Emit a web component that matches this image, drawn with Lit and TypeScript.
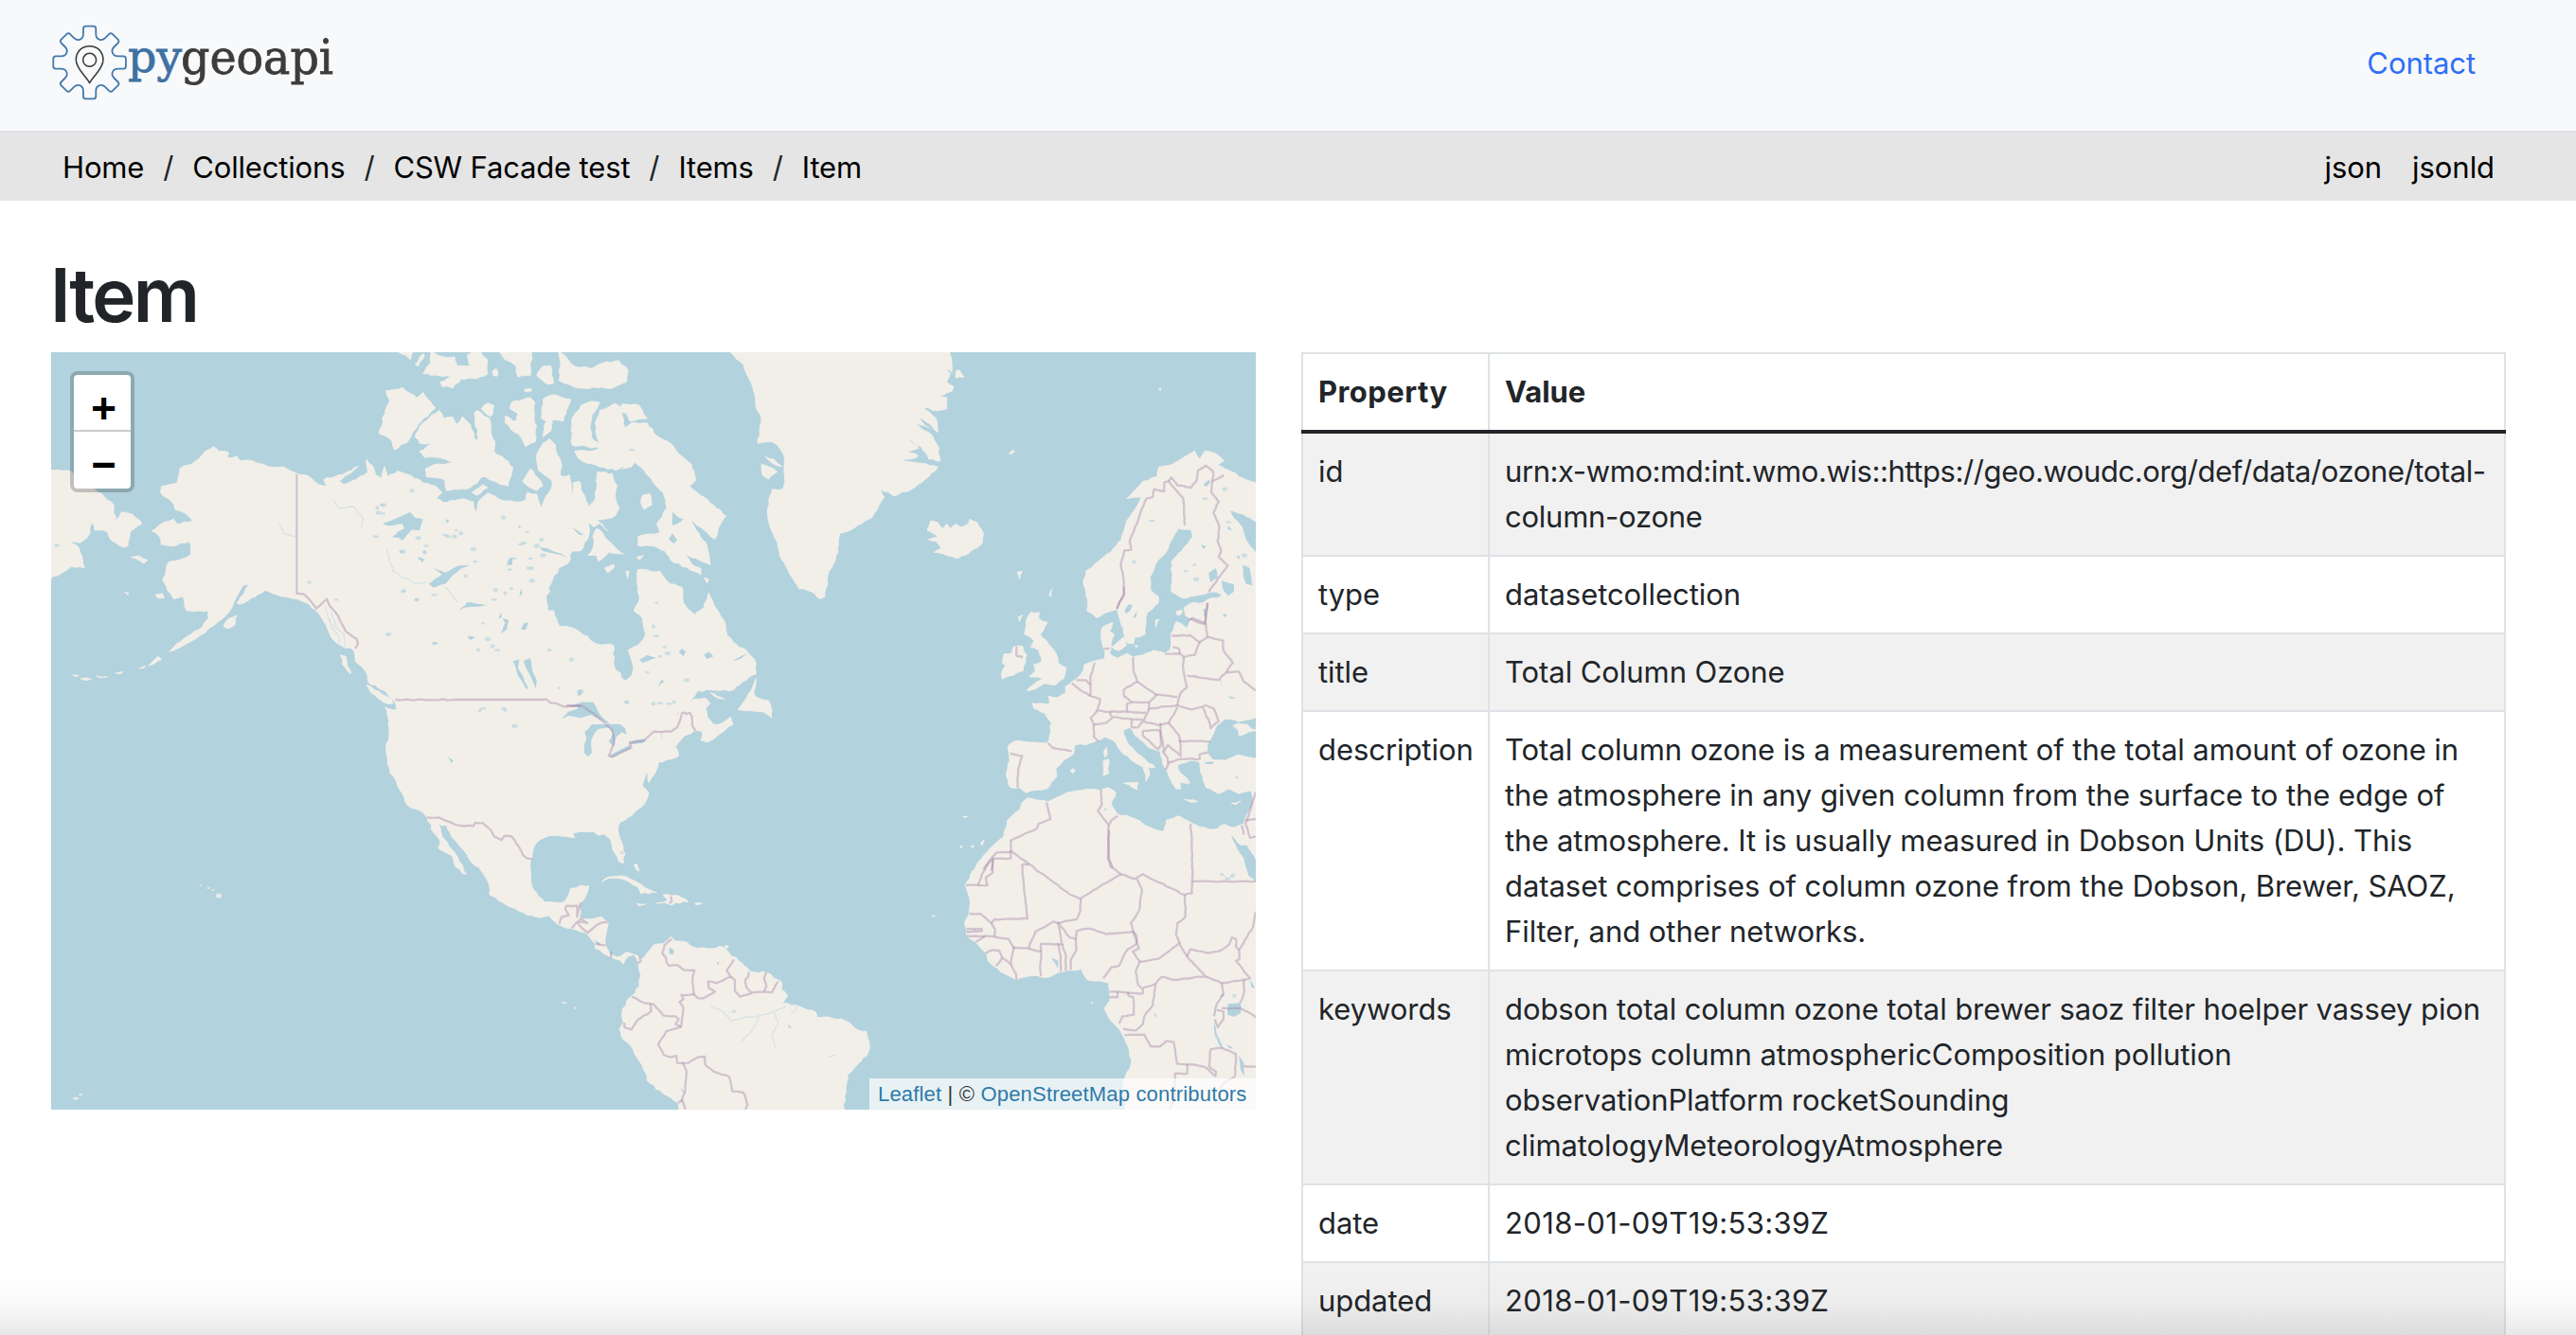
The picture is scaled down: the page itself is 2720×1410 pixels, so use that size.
import { LitElement, html, svg, css } from "lit";
import { customElement } from "lit/decorators.js";
import { classMap } from "lit/directives/class-map.js";

/* ---------- map geometry ---------- */

type Point = [number, number];

/** Survey sheets: origin on the page plus units per pixel on both axes. */
const SHEETS: Record<string, [number, number, number, number]> = {
  A: [50, 370, 3, 3],
  B: [400, 370, 3, 3],
  C: [740, 370, 2.657, 3],
  D: [380, 720, 3, 3],
  E: [980, 620, 3, 3],
  F: [980, 860, 3, 3],
  G: [780, 980, 3, 3],
};

/** Parses "A x,y x,y B x,y ..." into map points. */
function trace(source: string): Point[] {
  let sheet = SHEETS.A;
  const points: Point[] = [];
  for (const token of source.trim().split(/\s+/)) {
    if (SHEETS[token]) {
      sheet = SHEETS[token];
      continue;
    }
    const [x, y] = token.split(",").map(Number);
    points.push([sheet[0] + x / sheet[2], sheet[1] + y / sheet[3]]);
  }
  return points;
}

let seed = 7;
function noise(): number {
  seed = (seed * 16807) % 2147483647;
  return seed / 2147483647 - 0.5;
}

function roughen(points: Point[], closed: boolean, amount: number): Point[] {
  const out: Point[] = [];
  const last = closed ? points.length : points.length - 1;
  for (let i = 0; i < last; i++) {
    const a = points[i];
    const b = points[(i + 1) % points.length];
    const dx = b[0] - a[0];
    const dy = b[1] - a[1];
    const len = Math.hypot(dx, dy);
    out.push(a);
    const steps = len < 80 ? Math.floor(len / 4) : 0;
    for (let s = 1; s < steps; s++) {
      const t = s / steps;
      const k = (noise() * amount) / len;
      out.push([a[0] + dx * t - dy * k, a[1] + dy * t + dx * k]);
    }
  }
  if (!closed) out.push(points[points.length - 1]);
  return out;
}

function toPath(points: Point[], closed: boolean): string {
  return "M" + points.map((p) => p[0].toFixed(1) + " " + p[1].toFixed(1)).join("L") + (closed ? "Z" : "");
}

const area = (s: string, amount = 1.8) => toPath(roughen(trace(s), true, amount), true);
const line = (s: string, amount = 0) => toPath(roughen(trace(s), false, amount), false);

const AMERICAS = `A 528,305 545,320 575,325 570,340 600,335 610,350 650,350 700,368 750,370 790,390 820,395 860,425 885,430
 875,410 910,400 950,385 985,368 960,390 925,415 940,425 990,400 1015,385 1010,345 1030,365 1040,395 1060,405 1068,368
 1078,400 1110,382 1150,395 1190,420 1230,430 1250,450
 B 180,470 215,482 270,470 300,480 310,525 315,480 345,452 390,475 430,480 465,475 470,450 500,455 515,500 525,470 545,440
 550,400 590,400 605,395 612,460 615,420 635,415 645,450 665,500 680,480 690,440 692,385 740,390 755,430 750,470 762,500
 740,530 690,534 725,572 700,548 680,560 665,545 668,570 660,600 640,635 612,636 600,675 570,690 545,740 530,790 535,825
 555,825 572,875 610,878 640,895 690,930 743,935 745,1000 780,1048 805,1020 800,980 790,950 820,935 845,900 835,850
 808,825 825,790 818,740 820,695 850,695 890,700 925,740 960,750 965,800 1000,838 1030,815 1045,768 1070,820 1090,850
 1105,905 1140,940 1165,950 1195,990 1195,1025 1165,1045 1125,1075 1080,1078 1010,1078 985,1110
 D 1000,110 1030,75 1060,55 1095,52 1110,68 1095,85 1100,110 1120,135 1150,130 1175,112 1182,135 1155,155 1100,192
 1080,185 1085,160 1060,155 1020,180 1000,205 1010,235 985,245 945,255 935,290 915,320 905,285 900,310 895,330 915,350
 908,375 880,405 850,430 825,445 818,470 830,510 840,545 835,575 820,570 800,530 795,500 775,483 755,487 740,475 700,475
 675,480 680,495 640,490 600,488 560,510 547,540 545,560 540,590 542,635 565,680 585,698 620,700 650,695 668,655 700,645
 725,647 715,680 700,700 695,745 720,752 765,745 787,762 780,800 778,835 795,865 815,872 850,857 880,868 895,880 918,850
 930,835 960,830 985,808 1000,822 1035,825 1050,838 1100,845 1150,840 1170,860 1200,885 1235,918 1290,922 1335,950
 1335,975 1355,995
 G 140,240 180,245 195,250 245,268 250,285 270,282 325,288 350,300 380,325 405,328 414,365 410,395 370,440 345,465
 340,520 330,590
 D 1010,1370 1008,1335 960,1305 910,1265 905,1240 870,1180 850,1145 828,1125 822,1100 835,1080 830,1050 845,1010 862,995
 885,965 890,930 882,895 868,865 850,870 835,895 815,880 790,870 760,850 745,845 745,830 715,795 680,785 640,775 600,742
 570,748 530,740 480,715 440,695 410,675 408,640 385,600 345,560 325,530 290,490 275,455 248,450 260,490 290,530 315,570
 338,610 325,608 298,575 290,550 248,528 255,510 235,480 212,430 200,415 150,390 128,345 115,315 95,290 88,250 83,210
 92,160 88,110 80,80
 A 1105,1140 1105,1125 1075,1085 1015,1050 1010,1020 975,985 970,950 920,930 895,900 870,850 830,805 790,788 740,780
 690,760 660,780 610,805 600,800 640,740 620,745 590,800 575,830 540,860 500,895 450,925 385,955 430,915 480,885 510,850
 510,825 480,825 440,825 430,780 400,788 380,760 365,725 385,670 430,660 455,645 450,605 410,618 360,615 355,590 330,572
 360,550 400,535 410,550 460,540 435,515 405,505 390,475 358,450 362,430 410,420 420,375 470,350 500,320`;

const OLD_WORLD = `C 1590,430 1557,420 1530,410 1490,385 1470,375 1450,365 1468,350 1440,325 1415,318 1400,345 1385,318 1360,335
 1340,350 1310,365 1285,370 1280,400 1240,415 1220,440 1195,470 1235,465 1220,500 1195,540 1180,600 1150,640 1130,655
 1080,700 1073,740 1085,790 1083,825 1110,848 1140,830 1168,820 1175,850
 E 612,120 632,178 650,180 655,160 688,150 690,120 695,80 730,50 730,30
 C 1262,760 1260,720 1275,680 1305,640 1322,600 1340,565 1375,568 1380,590 1350,635 1320,670 1322,720 1320,765 1350,785
 1400,775 1440,765 1460,775
 E 928,30 885,40 870,50 830,52 810,65 815,90 830,100 820,130 800,115 785,110 768,150 770,185 765,200 750,210 715,200
 690,210 650,222 630,210 600,225 575,210 580,180 590,150 575,140 585,112 550,130 548,165 560,200 558,228 525,235 495,245
 485,275 455,300 435,315 435,335 410,350 380,345 385,370 330,368 335,385 370,400 390,430 385,470 378,495 330,492 275,488
 252,505 258,550 248,600 260,635 290,635 310,652 330,645 375,640 408,600 405,575 430,548 460,530 465,500 500,500 530,490
 560,475 585,485 610,520 640,545 680,570 690,600 690,615 702,595 695,570 720,572 690,548 655,520 630,490 618,455 640,445
 655,470 700,510 735,520 742,560 755,580 765,605 785,640 800,640 798,620 825,625 800,590 790,565 830,550 860,555 862,575
 870,600 880,635 920,655 950,640 985,655 1022,645 1030,680 1010,720 1000,750 970,762 940,752 905,768 860,760 835,748
 790,725 755,738 745,775 700,760 670,740 640,728 600,720 580,690 595,650 570,635 545,645 500,640 440,650 410,665 380,680
 345,675 315,668 300,680 290,705 250,740 240,790 205,820 160,870 140,900
 F 118,225 132,270 130,310 115,345 122,385 150,405 185,440 190,465 240,505 280,525 330,512 375,518 430,498 485,490
 505,525 545,528 572,535 575,590 558,615 575,650 605,680 622,710 635,740 643,790 625,830 615,870 625,900 620,950
 1060,950`;

const ISLANDS = [
  "A 0,378 60,380 85,392 150,440 210,490 215,540 235,512 270,520 300,550 262,575 255,620 240,625 200,600 190,575 150,570 140,545 135,580 105,610 70,605 100,625 118,690 75,685 0,732",
  "A 265,655 290,650 318,665 305,675 285,662",
  "A 558,875 575,850 600,840 595,868 572,882",
  "A 342,775 365,770 370,785 350,785",
  "A 320,1000 350,970 362,980 340,992",
  "A 290,1008 310,1000 308,1006",
  "A 215,1022 240,1018 230,1026",
  "A 155,1032 190,1034 170,1038",
  "A 80,1028 100,1030 90,1034",
  "A 105,1040 140,1042 120,1046",
  "A 245,765 258,770 254,775",
  "A 1010,1060 1050,1080 1090,1105 1095,1120 1065,1115 1025,1085",
  "A 928,965 945,970 950,1000 962,1025 935,995",
  "B 22,128 75,118 120,150 140,133 180,183 135,225 108,258 95,285 50,315 35,280 2,265 20,190 35,160",
  "B 190,190 205,215 235,212 245,235 265,210 290,235 305,285 315,280 302,200 310,190 350,215 355,260 368,290 365,320 400,345 425,372 410,430 385,425 330,400 290,435 215,445 210,412 150,400 148,375 180,360 235,358 190,340 145,340 128,320 170,297 130,295 115,275 130,240",
  "B 325,185 345,167 365,175 355,210",
  "B 295,450 330,425 345,435 310,460",
  "B 420,165 445,160 480,150 495,165 492,215 500,240 495,290 465,305 450,275 430,260 400,230 400,208 435,225 440,200 415,185",
  "B 520,155 555,140 608,155 585,225 550,220 545,255 520,275 530,225 515,215",
  "B 540,280 560,300 565,330 580,365 575,400 545,410 505,380 500,330 520,295",
  "B 480,375 505,405 520,430 500,445 470,430 455,415",
  "B 770,170 825,175 850,215 810,222 795,225 785,200 768,195",
  "B 612,215 640,175 670,162 700,165 675,205 670,250 680,285 700,295 690,270 685,230 700,190 750,168 765,180 780,245 800,230 850,230 880,270 925,295 960,335 990,360 1005,410 985,430 1030,465 1060,490 1100,525 1075,565 1065,598 1030,570 990,535 1005,570 1040,620 1050,680 1025,670 980,650 1020,690 1020,712 985,695 925,665 905,635 870,620 820,618 820,590 850,582 890,578 880,550 912,500 900,450 870,420 840,380 810,355 800,370 750,380 700,370 660,358 630,340 620,320 680,318 700,310 660,305 612,300",
  "B 835,460 860,455 865,490 840,505 830,485",
  "B 690,565 710,580 740,615 775,645 730,640 695,668 690,650 662,650 680,620 678,590",
  "B 715,690 745,678 745,690 725,705",
  "B 782,700 793,700 788,722",
  "B 818,655 838,650 825,665",
  "B 1030,720 1045,725 1040,738",
  "B 570,0 600,30 620,50 670,58 710,40 760,32 790,65 785,100 745,118 640,120 590,105 570,95 575,50",
  "B 520,50 545,50 553,105 535,108 500,80",
  "B 380,0 485,0 480,80 440,85 435,50 400,30",
  "B 165,0 200,20 240,20 250,50 290,50 280,15 320,0 345,30 345,75 310,90 260,90 235,120 200,115 195,100 230,85 140,75 165,40",
  "B 360,65 372,58 378,70 375,82 362,80",
  "B 55,0 110,0 100,30 85,15",
  "B 115,45 140,10 145,15 125,50",
  "B 460,125 480,120 485,128 465,132",
  "B 1195,1040 1170,1090 1138,1138 1180,1142 1215,1145 1245,1165 1245,1140 1235,1110 1190,1095",
  "B 1050,1085 1095,1105 1065,1098",
  "C 72,0 120,45 135,90 148,130 155,180 170,215 160,295 200,290 215,300 235,340 235,400 230,440 200,440 187,500 195,560 215,610 225,660 250,710 275,755 310,765 335,788 348,780 360,700 385,640 390,580 420,570 450,550 480,530 500,490 515,465 505,440 545,462 600,435 640,400 665,370 620,358 565,352 610,335 580,318 612,310 570,268 618,305 640,345 672,350 668,310 650,270 600,230 640,245 585,190 630,225 665,260 660,215 625,180 665,192 690,185 690,150 665,145 705,130 710,115 690,100 700,75 668,45 705,70 704,40 698,0",
  "C 170,360 190,368 215,385 190,408 172,395",
  "C 180,335 205,345 228,368 200,358",
  "C 715,65 725,62 738,85 715,88",
  "C 635,570 645,540 665,545 680,565 690,550 700,565 715,550 730,560 750,550 755,535 775,545 793,580 790,610 755,640 720,660 690,650 655,640 675,628 660,605 638,600 665,592",
  "C 865,326 876,316 880,322 868,330",
  "C 1284,122 1290,120 1290,128",
  "C 888,702 902,700 895,725",
  "C 977,775 985,755 982,780",
  "E 325,80 352,80 350,100 378,112 355,150 375,170 405,210 412,240 437,255 430,290 405,310 370,305 345,320 312,328 345,300 365,290 320,285 340,265 335,245 360,235 350,200 325,190 335,170 305,150 310,110",
  "E 270,190 300,188 312,215 302,265 270,280 235,292 232,275 245,250 235,240 240,212 265,210",
  "E 285,95 300,88 290,110",
  "E 555,550 572,545 572,590 555,598",
  "E 565,508 568,530 560,540 556,522",
  "E 620,622 665,618 662,642",
  "E 812,672 855,680 830,682",
  "E 960,685 990,677 975,689",
  "E 605,170 620,158 628,185 605,202 582,190",
  "E 720,105 732,102 722,128",
  "E 785,78 805,72 802,86 790,90",
  "E 450,582 460,575 466,582 458,590",
  "E 655,185 664,186 660,192",
  "E 800,590 830,622 815,615",
  "E 110,727 125,727 118,731",
  "E 135,822 145,818 142,826",
  "E 165,812 178,800 172,818",
  "E 100,822 108,820 106,828",
  "F 515,596 523,597 518,600",
  "F 12,320 22,322 16,325",
  "D 765,635 790,618 830,615 870,630 900,650 940,668 890,672 880,650 840,628 800,622",
  "D 960,676 1010,678 1040,698 1000,700 990,708 965,700 940,702 975,692",
  "D 875,702 905,705 885,710",
  "D 1062,700 1085,703 1065,708",
  "D 868,580 878,578 885,600 875,595",
  "D 1155,838 1168,836 1162,846",
  "D 640,1016 655,1017 648,1020",
  "D 678,1032 686,1034 682,1037",
  "G 165,270 182,250 178,262",
];

/** Small Pacific islands, placed directly in map coordinates. */
const ATOLLS: [number, number, number, number][] = [
  [212, 935, 1.2, 0.9],
  [220, 938, 1.6, 1],
  [225, 940, 1.4, 0.9],
  [231, 946, 3, 2.6],
  [80, 1160, 3, 1.6],
  [85, 1156, 2, 1.2],
];

const LAKES = [
  "D 638,118 660,95 690,85 700,65 740,65 765,110 795,138 760,118 730,105 700,115 660,108",
  "D 735,135 712,160 718,180 710,200 710,225 722,238 735,225 732,190 742,165 755,150 790,145 800,160 800,170 788,190 805,205 812,175 830,160 845,168 840,148 825,135 790,135",
  "D 790,235 820,218 855,200 855,212 800,240",
  "D 850,198 870,185 908,182 895,195 865,198",
  "D 688,30 700,25 704,38 692,46",
  "D 278,237 296,250 290,258",
  "D 980,842 995,850 992,865 980,862",
  "D 740,815 765,832 755,834",
  "B 458,985 480,975 485,1010 500,1045 498,1072 488,1050 470,1015",
  "B 425,985 445,980 440,1005 455,1030 475,1075 465,1070 440,1030 432,1000",
  "B 158,740 200,710 165,685 210,705 245,685 290,680 255,695 235,712 210,740 175,752",
  "B 12,550 60,530 100,512 115,530 140,535 130,570 105,568 75,603 65,595 42,592 60,575 80,565 75,550 30,556",
  "B 255,825 280,798 310,803 350,808 300,812 270,815",
  "B 385,898 400,865 392,848 412,855 405,885",
  "B 378,850 388,830 390,845",
  "B 450,885 460,865 474,862 465,885",
  "B 405,680 412,660 425,655 422,680",
  "B 508,625 535,628 600,655 560,645 520,636",
  "B 612,560 650,585 635,585",
  "B 445,780 450,755 455,770",
  "B 930,512 950,530 965,535 945,550 930,555",
  "B 918,600 930,580 945,600 935,612",
  "B 973,648 1000,665 1022,690 995,680",
  "B 825,980 850,965 880,975 850,985 835,990",
  "B 1030,965 1045,955 1060,970 1040,978",
  "B 950,955 960,945 972,955 965,970",
  "B 1120,985 1165,960 1150,975",
  "B 885,1065 895,1045 905,1048",
  "B 280,905 305,910 290,918",
  "B 165,927 190,928 175,932",
  "B 123,655 145,662 138,672",
  "B 440,555 452,558 445,564",
  "B 215,535 223,540 217,550",
  "B 600,1128 650,1112 640,1130",
  "E 1060,410 985,428 960,420 940,420 915,440 900,475 885,500 885,525 900,545 940,548 980,530 1060,545",
  "E 875,555 905,552 900,562 880,560",
  "E 622,75 635,55 648,58 640,75 628,85",
  "E 650,95 662,75 658,98",
  "E 872,70 880,68 880,95 874,92",
  "E 930,-20 968,-10 968,15 950,28 935,10",
  "E 935,88 946,86 942,94",
  "E 950,345 975,352 960,354",
  "E 972,600 984,602 980,608",
  "E 558,702 568,704 560,708",
  "F 960,65 980,90 1000,108 990,98 1010,98 1038,145 1060,175 1060,260 1040,215 1015,195 1000,140 980,110",
  "F 950,600 990,598 990,630 970,642 948,635",
  "F 905,640 915,700 938,745 925,735 908,700",
  "F 985,765 1000,785 1002,830 992,815",
  "F 1020,525 1036,552 1024,548",
  "F 925,575 942,565 932,580",
  "F 945,730 968,742 955,742",
  "F 390,455 412,465 412,490 402,472",
  "F 715,625 725,640 720,642",
  "C 1485,508 1520,520 1560,545 1590,555 1590,660 1557,640 1530,600 1520,560 1495,530",
  "C 1520,680 1540,690 1548,745 1530,740 1522,715",
  "C 1502,655 1512,650 1510,662",
  "C 1410,425 1425,410 1430,418 1418,432",
  "C 1425,705 1445,690 1450,720 1430,735",
  "C 1480,555 1490,570 1478,568",
  "C 1403,615 1418,622 1410,630",
  "G 155,305 168,315 160,318",
  "G 282,410 310,400 295,408",
  "D 1130,888 1138,888 1134,900",
  "D 1014,1285 1034,1305 1022,1300",
];

const CRIMEA = "E 965,440 980,432 1010,435 1025,450 1045,455 1015,460 985,472 982,452";

const SPECKS = `B 75,765 120,790 175,775 275,715 305,670 300,630 245,570 260,580 210,585 145,640 72,638 15,490 470,575 515,600
 450,615 485,690 480,660 520,650 430,660 370,760 365,790 400,770 420,755 485,730 330,865 360,938 375,950 315,950 540,950
 345,915 180,928 395,530 880,905 870,875 905,940 915,960 890,970 785,1115 890,1118 935,1115 850,1020 975,1045 570,1070
 610,980 330,1135 400,1140 150,620 125,595 15,518 105,445 800,315 770,375 415,695 500,620 880,800 475,690 460,610
 A 1195,640 1180,660 1125,638 1265,540 1290,590 1270,590 1045,500 1060,490 1050,515 1170,790 1130,762 1040,590 830,735
 915,790 1080,900 1225,928 30,618 C 1265,540 1215,670 1360,700 1390,725 1385,680 1470,440 1415,470 1470,840 1480,545
 1525,650 F 930,190 965,195 950,205 970,575 D 1185,1045 700,30 845,65 930,70 980,70 380,92 455,85 490,140 830,542`;

const RIVERS = [
  "A 905,475 925,500 970,495 1000,535 995,565",
  "A 1075,630 1095,700 1165,740 1200,735",
  "A 735,550 750,580 785,590",
  "B 210,750 250,800",
  "D 1110,1025 1150,1045 1175,1075 1215,1065 1260,1060 1300,1050 1350,1030",
  "D 1210,1140 1250,1095 1265,1060",
  "D 1315,1160 1305,1120 1325,1085 1315,1050",
  "D 958,155 956,180",
  "A 880,810 890,850 910,880",
  "A 900,830 915,880 940,900 940,940",
  "A 895,850 900,880 920,900 925,930",
  "F 930,190 950,205 970,185",
  "E 925,290 930,310",
  "G 165,272 180,262 185,250",
];

const BORDERS = [
  "A 790,392 790,770 812,773 830,790 852,818 885,788 895,810 920,840 945,890 980,915 984,930 975,945",
  "A 1102,1107 1290,1107 B 520,1107 530,1105 545,1118 560,1118 590,1130 600,1125 640,1128",
  "D 655,78 700,75 740,100 770,125 800,155 805,195 788,235 800,238 860,210 855,192 900,188 930,158 985,158 1005,145 1020,100 1030,98 1035,103 1045,98 1052,110 1053,140 1063,155",
  "D 212,430 250,430 270,440 315,456 360,457 365,447 390,448 415,470 425,490 448,502 458,488 480,490 505,525 517,550 530,560 548,562",
  "D 632,768 640,745 662,740 650,720 655,710 688,710 688,745 700,700",
  "D 672,782 690,760 720,765 D 700,750 690,765 708,785 722,795 740,780 760,765 785,762",
  "D 745,830 778,835",
  "D 795,855 796,875",
  "D 885,870 890,885 880,892",
  "D 985,680 988,695 980,703",
  "D 988,815 965,835 958,860 970,875 972,892 980,900 1005,898 1025,913 1060,915 1053,950 1058,990 1070,1003 1090,1003 1125,982 1105,970 1103,950 1130,955 1175,935 1162,915 1185,880",
  "D 1175,935 1188,945 1188,980 1205,998 1245,985 1285,982 1305,985 1325,950",
  "D 1232,920 1230,935 1220,945 1225,970 1240,985",
  "D 1288,920 1280,940 1288,965 1280,980",
  "D 1060,990 1018,993 1025,1005 1012,1015 1024,1030 1018,1093 1000,1085 1010,1070 1000,1060 962,1058 930,1022 900,1018 862,998",
  "D 920,1020 922,1045 880,1072 860,1102 838,1095 838,1080",
  "D 1018,1093 970,1108 945,1150 962,1182 985,1190 1003,1185 1005,1208 1040,1208 1070,1190 1093,1188 1095,1215 1120,1235 1170,1252 1180,1298 1215,1302 1228,1340 1220,1358",
  "D 1022,1208 1035,1235 1030,1300 1020,1325 1032,1356",
  "D 1022,1325 1008,1335",
  "C 1168,820 1172,805 1188,770 1185,720 1178,680 1188,635 1208,632 1203,605 1250,470 1268,465 1272,440 1300,447 1300,418 1312,415 1353,468 1358,555",
  "C 1312,415 1320,403 1338,428 1375,435 1390,415 1395,380 1417,365 1438,385 1432,450 1453,480 1438,515 1455,560 1450,605 1460,635 1453,655 1478,682 1425,765",
  "C 1435,415 1468,395",
  "C 1421,800 1415,865 1380,848 1368,856",
  "E 620,0 620,25 598,68",
  "E 885,50 878,110 885,158 860,175 830,153 770,155",
  "E 830,100 850,110 878,118",
  "E 860,175 845,215 810,222 800,212 750,212",
  "E 775,190 795,195 797,212",
  "E 885,158 935,170 935,200 965,240 945,270 920,295 820,280",
  "E 810,222 808,260 820,318 800,335 790,375",
  "E 945,270 985,268 1000,300 1038,328",
  "E 650,222 650,265 662,300 620,325 620,345 645,365 630,370 630,395 575,395 535,392 545,355 513,345 515,280 528,240",
  "E 455,305 480,325 513,345",
  "E 470,295 500,295 513,310",
  "E 662,300 720,340 790,348",
  "E 645,365 700,365 725,340",
  "E 700,365 700,385 790,375 835,388 880,375 905,385 920,425 895,448 888,420 868,378",
  "E 700,385 685,420 645,420 645,445 665,445 680,425 730,438 762,430 790,380",
  "E 630,395 690,398",
  "E 535,392 515,415 525,435 565,430 585,412 645,418",
  "E 575,395 580,410",
  "E 525,435 525,475 540,490",
  "E 380,495 395,510 455,520",
  "E 260,528 272,530 298,535 285,580 283,635",
  "E 558,195 575,195",
  "E 280,188 280,218 300,222",
  "E 680,455 735,455 738,500 728,515 680,470 680,455",
  "E 735,430 738,470 748,520 760,500 775,515 800,535 800,500 795,470 762,430",
  "E 795,488 850,488 895,490",
  "E 752,580 765,555 800,545 860,545 860,530 885,525",
  "E 742,520 758,540 760,560",
  "E 375,682 388,735 350,750 345,765 262,803 262,840 262,860 205,860 200,900",
  "E 262,840 215,842 200,860 175,895",
  "E 548,642 550,690 538,710 572,755 580,740 600,725",
  "E 572,755 572,860 585,890",
  "E 832,750 838,900 F 836,213 1060,213",
  "E 1038,650 1025,690 1005,750 1020,795 1038,790",
  "E 1005,740 1038,735",
  "E 993,755 1000,785",
  "F 262,115 450,255 480,268 610,190 577,165 570,140 572,50",
  "F 300,158 318,160",
  "F 298,158 305,250 315,330 210,333 200,345 165,315 130,315",
  "F 205,140 205,185 183,200 188,225 120,225",
  "F 200,145 170,190 158,225",
  "F 484,268 482,305 470,333 410,345 398,340 340,372 318,425 268,422",
  "F 122,363 170,363 170,370 122,372",
  "F 122,385 210,387 212,365 200,345",
  "F 150,405 180,388",
  "F 210,388 255,395 272,425 262,475 235,455 215,480",
  "F 183,440 205,430 225,432 235,455",
  "F 262,475 278,505 280,525",
  "F 318,425 358,435 355,480 358,512",
  "F 358,435 358,410 425,412 412,345 448,390 468,395 470,370 510,362 565,380 650,372",
  "F 412,412 420,450 420,498",
  "F 425,412 437,450 435,495",
  "F 468,395 470,430 452,460 452,493",
  "F 610,190 655,205 680,190 810,255 836,250 836,213",
  "F 662,205 678,240 668,305 642,345 650,372 660,385 660,410 630,430 605,480 580,485 555,520",
  "F 650,372 668,425 648,435 670,465 657,500 665,540 680,555 680,568 575,562",
  "F 670,468 730,458 795,410 820,450 880,515 860,515 785,525 740,515 720,538 680,550",
  "F 814,255 815,325 790,345 785,380 798,410",
  "F 820,450 830,428 890,440 930,430 955,410 962,390 975,395 975,420 985,430",
  "F 1038,310 1030,355 985,430 985,460 975,465 1020,520 995,525 930,535 880,515",
  "F 720,538 712,605 685,640 680,665 658,685 618,680",
  "F 600,562 600,580 572,580",
  "F 632,562 635,575 650,580 652,635 615,640 605,662",
  "F 622,700 685,698 705,735 735,735 755,718 778,722 788,790 850,795 880,802 910,830 912,815 890,800 895,745 930,740",
  "F 820,790 820,822 782,822 782,900 765,936",
  "F 930,535 935,570 915,600 905,640",
  "F 915,620 935,625 935,650 918,675 908,650",
  "F 930,615 990,615 1060,655",
  "F 1000,525 1000,570 988,598",
  "F 930,740 975,760 972,830 940,850 925,870",
  "F 1000,798 1060,800",
];

/* ---------- logo geometry ---------- */

/** One tooth of the gear, repeated eight times around the centre. */
const TOOTH: Point[] = [
  [-30, -73], [-20, -77], [-20, -90], [-20, -107], [-20, -115], [-12, -115],
  [12, -115], [20, -115], [20, -107], [20, -90], [20, -77], [30, -73],
];

function gearPath(): string {
  let d = "";
  for (let i = 0; i < 8; i++) {
    const a = (i * Math.PI) / 4;
    const p = TOOTH.map(([x, y]) =>
      `${(x * Math.cos(a) - y * Math.sin(a)).toFixed(2)} ${(x * Math.sin(a) + y * Math.cos(a)).toFixed(2)}`);
    d += `${i ? "L" : "M"}${p[0]}Q${p[1]} ${p[2]}L${p[3]}Q${p[4]} ${p[5]}L${p[6]}Q${p[7]} ${p[8]}L${p[9]}Q${p[10]} ${p[11]}`;
  }
  return d + "Z";
}

const PAGE_FONT = css`"Inter", "Liberation Sans", sans-serif`;

@customElement("geo-logo")
export class GeoLogo extends LitElement {
  static styles = css`
    :host { display: block; width: 360px; height: 100px; }
    svg { display: block; overflow: visible; }
    .gear { fill: none; stroke: #4479ac; stroke-width: 5.4; stroke-linejoin: round; }
    .pin { fill: none; stroke: #3a3a3a; stroke-width: 4.6; stroke-linejoin: round; }
    .word { font-family: "DejaVu Serif", "Liberation Serif", serif; stroke-width: 0.8; }
    .py { fill: #3f71a3; stroke: #3f71a3; font-size: 46px; }
    .geo { fill: #3c3c3b; stroke: #3c3c3b; font-size: 51px; }
  `;
  render() {
    return html`<svg width="360" height="100" viewBox="54 24 360 100" role="img">
      <g transform="translate(94.6 66) scale(0.3333)">
        <path class="gear" d=${gearPath()} />
        <path class="pin" d="M0 65C-12 42-43 20-43-8C-43-35-24-52 0-52S43-35 43-8C43 20 12 42 0 65Z" />
        <circle class="pin" cx="0" cy="-8" r="21" />
      </g>
      <text class="word py" x="135" y="76" textLength="57" lengthAdjust="spacingAndGlyphs">py</text>
      <text class="word geo" x="191" y="78" textLength="161" lengthAdjust="spacingAndGlyphs">geoapi</text>
    </svg>`;
  }
}

@customElement("geo-map")
export class GeoMap extends LitElement {
  static styles = css`
    :host { display: block; position: relative; width: 1272px; height: 800px; background: #b2d2dd; overflow: hidden; }
    .tiles { display: block; }
    .land { fill: #f2efe9; stroke: #f2efe9; stroke-width: 0.8; stroke-linejoin: round; }
    .atoll { fill: #f2efe9; opacity: 0.8; }
    .lake { fill: #b2d2dd; }
    .speck { fill: #b2d2dd; opacity: 0.6; }
    .river { fill: none; stroke: #d6e2e4; stroke-width: 1.3; }
    .border { fill: none; stroke: #a585a8; stroke-opacity: 0.42; stroke-width: 2.3; stroke-linejoin: round; }
    .soft { filter: blur(0.55px); }
    .zoom { position: absolute; left: 20px; top: 20px; width: 60px; border: 4px solid rgba(0, 0, 0, 0.2);
      border-radius: 8px; background-clip: padding-box; background-color: #fff; }
    .zoom button { all: unset; box-sizing: border-box; display: flex; align-items: center; justify-content: center;
      width: 60px; height: 60px; font: 600 47px/50px ${PAGE_FONT}; color: #000; }
    .zoom .in { border-bottom: 2px solid #ccc; padding: 6px 0 0 3px; }
    .zoom .out { padding: 4px 0 0 3px; }
    .attribution { position: absolute; right: 0; bottom: 0; box-sizing: border-box; width: 408px; height: 33px; padding-left: 9px;
      background: rgba(255, 255, 255, 0.7); color: #333; font: 22px/34px "Liberation Sans", Arial, sans-serif;
      letter-spacing: 0.18px; white-space: nowrap; }
    .attribution a { color: #2f7aa8; text-decoration: none; }
  `;
  render() {
    seed = 7;
    const specks = trace(SPECKS);
    return html`
      <svg class="tiles" width="1272" height="800" viewBox="54 372 1272 800">
        <g class="soft">
          <path class="land" d=${area(AMERICAS, 2.4)} />
          <path class="land" d=${area(OLD_WORLD)} />
          ${ISLANDS.map((s) => svg`<path class="land" d=${area(s, 2.2)} />`)}
          ${ATOLLS.map(([x, y, rx, ry]) => svg`<ellipse class="atoll" cx=${x} cy=${y} rx=${rx} ry=${ry} />`)}
          ${RIVERS.map((s) => svg`<path class="river" d=${line(s, 1.5)} />`)}
          ${LAKES.map((s) => svg`<path class="lake" d=${area(s, 1)} />`)}
          <path class="land" d=${area(CRIMEA, 1)} />
          ${specks.map((p, i) => svg`<ellipse class="speck" cx=${p[0]} cy=${p[1]} rx=${2 + (i % 3) * 0.6} ry=${1.3 + (i % 2) * 0.8} />`)}
          ${BORDERS.map((s) => svg`<path class="border" d=${line(s, 1)} />`)}
        </g>
      </svg>
      <div class="zoom">
        <button class="in">+</button>
        <button class="out">−</button>
      </div>
      <div class="attribution"><a>Leaflet</a> | © <a>OpenStreetMap contributors</a></div>`;
  }
}

const CRUMBS = ["Home", "Collections", "CSW Facade test", "Items", "Item"];

interface Row {
  key: string;
  lines: string[];
  tone?: "tight" | "snug" | "wide";
}

const ROWS: Row[] = [
  { key: "id", lines: ["urn:x-wmo:md:int.wmo.wis::https://geo.woudc.org/def/data/ozone/total-", "column-ozone"], tone: "tight" },
  { key: "type", lines: ["datasetcollection"] },
  { key: "title", lines: ["Total Column Ozone"] },
  {
    key: "description",
    lines: [
      "Total column ozone is a measurement of the total amount of ozone in",
      "the atmosphere in any given column from the surface to the edge of",
      "the atmosphere. It is usually measured in Dobson Units (DU). This",
      "dataset comprises of column ozone from the Dobson, Brewer, SAOZ,",
      "Filter, and other networks.",
    ],
  },
  {
    key: "keywords",
    lines: [
      "dobson total column ozone total brewer saoz filter hoelper vassey pion",
      "microtops column atmosphericComposition pollution",
      "observationPlatform rocketSounding",
      "climatologyMeteorologyAtmosphere",
    ],
    tone: "snug",
  },
  { key: "date", lines: ["2018-01-09T19:53:39Z"], tone: "wide" },
  { key: "updated", lines: ["2018-01-09T19:53:39Z"], tone: "wide" },
];

@customElement("app-root")
export class AppRoot extends LitElement {
  static styles = css`
    :host { display: block; position: relative; width: 2720px; height: 1410px; overflow: hidden; background: #fff;
      color: #212529; font-family: ${PAGE_FONT}; font-size: 31px; font-weight: 420; line-height: 48px; letter-spacing: -0.06px; }
    .header { box-sizing: border-box; height: 140px; display: flex; justify-content: space-between; align-items: flex-start;
      padding: 24px 106px 0 54px; background: #f8f9fb; border-bottom: 2px solid #dee2e6; }
    .contact { padding-top: 19px; color: #2f6ff6; text-decoration: none; }
    .crumbs { box-sizing: border-box; height: 72px; display: flex; justify-content: space-between; align-items: center;
      padding: 1px 86px 0 66px; background: #e5e5e5; color: #000; }
    .trail, .formats { display: flex; }
    .trail { letter-spacing: -0.16px; }
    .sep { width: 51px; text-align: center; color: #212529; }
    .formats { gap: 32px; }
    h1 { margin: 0; padding: 52px 0 0 53px; font-weight: 600; font-size: 78px; line-height: 96px; letter-spacing: -2.6px; height: 108px; }
    .body { display: flex; gap: 48px; padding: 0 74px 0 54px; }
    .table { box-sizing: border-box; width: 1272px; border: 2px solid #dee2e6; border-bottom: 0; }
    .row { display: grid; grid-template-columns: 195px 1fr; border-bottom: 2px solid #dee2e6; }
    .row:nth-child(even) { background: #f1f1f1; }
    .head { font-weight: 700; border-bottom: 4px solid #212529; margin: 0 -2px; padding: 0 2px; }
    .head .cell:first-child { letter-spacing: 0.45px; }
    .cell { padding: 16px 0 16px 16px; white-space: nowrap; }
    .cell + .cell { border-left: 2px solid #dee2e6; }
    .line { display: block; }
    .tight { letter-spacing: -0.42px; }
    .tight .line:last-child { letter-spacing: -0.25px; }
    .snug { letter-spacing: -0.09px; }
    .wide { letter-spacing: 0.36px; }
    .fade { position: absolute; left: 0; right: 0; bottom: 0; height: 64px; pointer-events: none;
      background: linear-gradient(rgba(0, 0, 0, 0), rgba(0, 0, 0, 0.025) 50%, rgba(0, 0, 0, 0.09)); }
  `;
  render() {
    return html`
      <header class="header">
        <geo-logo></geo-logo>
        <a class="contact">Contact</a>
      </header>
      <nav class="crumbs">
        <div class="trail">
          ${CRUMBS.map((c, i) => html`${i ? html`<span class="sep">/</span>` : ""}<span>${c}</span>`)}
        </div>
        <div class="formats"><span>json</span><span>jsonld</span></div>
      </nav>
      <h1>Item</h1>
      <main class="body">
        <geo-map></geo-map>
        <section class="table">
          <div class="row head"><div class="cell">Property</div><div class="cell">Value</div></div>
          ${ROWS.map((r) => html`<div class="row">
            <div class="cell">${r.key}</div>
            <div class=${classMap({ cell: true, tight: r.tone === "tight", snug: r.tone === "snug", wide: r.tone === "wide" })}>
              ${r.lines.map((l) => html`<span class="line">${l}</span>`)}
            </div>
          </div>`)}
        </section>
      </main>
      <div class="fade"></div>`;
  }
}
